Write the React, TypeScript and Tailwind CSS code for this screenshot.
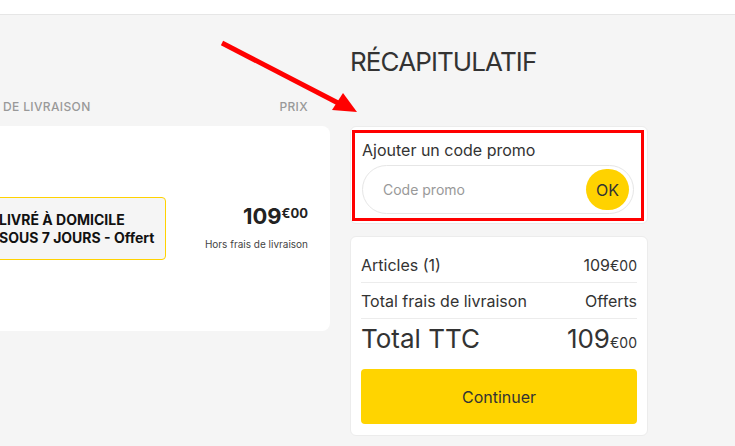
import React from 'react';

const font = { fontFamily: 'Inter, "Noto Sans", sans-serif' };

function Price({ big, small, className }: { big: string; small: string; className?: string }) {
  return (
    <span className={className}>
      {big}
      <span className="text-[14px]">{small}</span>
    </span>
  );
}

export default function App() {
  return (
    <div className="relative h-[446px] w-[735px] overflow-hidden bg-[#f5f5f5] text-[#333]" style={font}>
      <div className="h-[15px] border-b border-[#e6e6e6] bg-white" />

      <div className="flex gap-[20px]">
        {/* livraison column, partly off screen */}
        <div className="-ml-[70px] w-[400px] shrink-0 pt-[83px]">
          <div className="flex justify-between pl-[32px] pr-[22px] text-[12px] font-medium uppercase tracking-[0.03em] text-[#999]">
            <span>Mode de livraison</span>
            <span>Prix</span>
          </div>
          <div className="mt-[10px] flex h-[205px] items-center justify-between rounded-lg bg-white pl-[50px] pr-[22px]">
            <div className="flex h-[63px] w-[186px] flex-col justify-center rounded-[4px] border border-[#ffd200] bg-[#f5f5f5] px-[18px] text-[14px] font-bold leading-[18px] text-[#111]">
              <span>LIVRÉ À DOMICILE</span>
              <span className="whitespace-nowrap">SOUS 7 JOURS - Offert</span>
            </div>
            <div className="flex flex-col items-end">
              <span className="text-[22px] font-bold leading-none text-[#222]">
                109<span className="relative -top-[6px] text-[13px]">€00</span>
              </span>
              <span className="mt-[10px] text-[10px] text-[#444]">Hors frais de livraison</span>
            </div>
          </div>
        </div>

        {/* récapitulatif column */}
        <div className="w-[298px] shrink-0 pt-[30px]">
          <h2 className="text-[26px] font-normal uppercase leading-[34px] tracking-[-0.9px] text-[#333]">Récapitulatif</h2>

          <div className="mt-[47px] rounded-md border border-[#ececec] bg-white px-[1px] pb-[2px] pt-[3px]">
            <div className="mr-[2px] border-[3px] border-[#ff0000] px-[7px] pb-[4px] pt-[6px]">
              <p className="text-[16px] leading-[22px] text-[#333]">Ajouter un code promo</p>
              <div className="mt-[4px] flex h-[49px] items-center justify-between rounded-full border border-[#e6e6e6] pl-[20px] pr-[4px]">
                <span className="text-[14px] text-[#999]">Code promo</span>
                <button className="flex h-[41px] w-[43px] items-center justify-center rounded-full bg-[#ffd200] text-[16px] text-[#333]">
                  OK
                </button>
              </div>
            </div>
          </div>

          <div className="mt-[12px] rounded-md border border-[#ececec] bg-white px-[10px] pb-[11px] pt-[10px]">
            <div className="flex h-[36px] items-center justify-between border-b border-[#ececec] text-[16px]">
              <span>Articles (1)</span>
              <Price big="109" small="€00" />
            </div>
            <div className="flex h-[36px] items-center justify-between border-b border-[#ececec] text-[16px]">
              <span>Total frais de livraison</span>
              <span>Offerts</span>
            </div>
            <div className="flex h-[40px] items-center justify-between text-[26px] leading-none">
              <span>Total TTC</span>
              <Price big="109" small="€00" />
            </div>
            <button className="mt-[10px] flex h-[55px] w-full items-center justify-center rounded-[4px] bg-[#ffd400] text-[16px] text-[#333]">
              Continuer
            </button>
          </div>
        </div>
      </div>

      {/* annotation arrow */}
      <svg className="pointer-events-none absolute left-0 top-0" width="735" height="446">
        <line x1="222" y1="43" x2="340" y2="104" stroke="#ff0000" strokeWidth="5" />
        <polygon points="357,112 332,110 343,93" fill="#ff0000" />
      </svg>
    </div>
  );
}
